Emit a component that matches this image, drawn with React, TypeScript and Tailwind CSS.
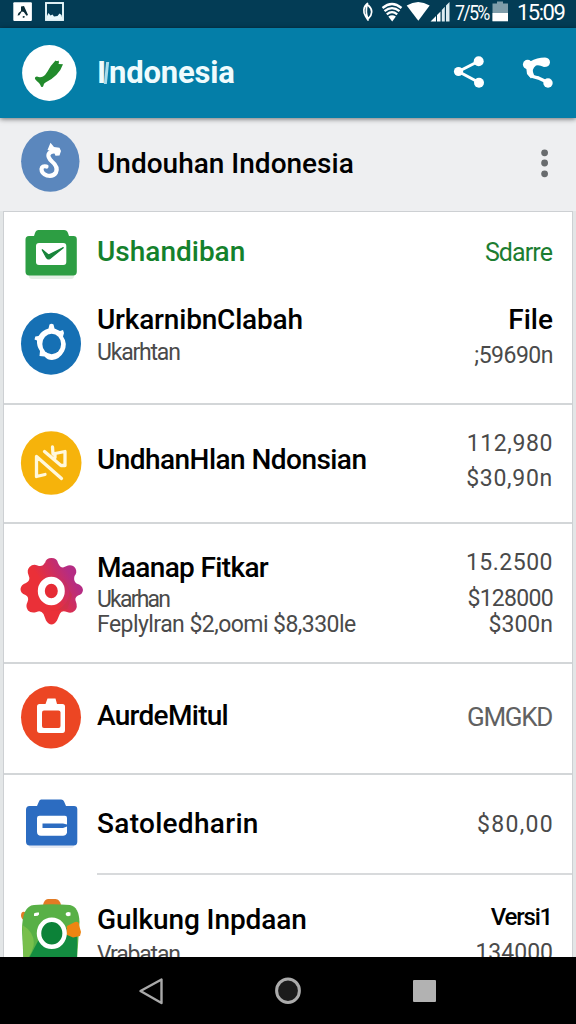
import type { ReactNode } from "react";

const TITLE = "h-6 text-[28px] leading-6 font-medium text-black whitespace-nowrap";
const SUB = "h-6 text-[23px] leading-6 text-[#4a4a4a] whitespace-nowrap";

function StatusBar() {
  return (
    <div className="flex h-[28px] shrink-0 items-start bg-[#033c55] text-white">
      <svg className="ml-[13px] mt-[2px] h-[19px] w-[19px]" viewBox="13 2 19 19">
        <rect x="13.3" y="2.2" width="18.6" height="18.8" rx="1" fill="#fff" />
        <path d="M21 6.500l3-0.500 2 4.500 2 4.500-1.500 0.800-2.700-3.800-2-0.500-2.500 3.800-1.800 0.200 1-2.500 2.500-2z M23 16l2 0.500-1 1.500-1.500-.8z" fill="#0a2a35" />
      </svg>
      <svg className="ml-[13px] mt-[2px] h-[19px] w-[19px]" viewBox="45 2 19 19">
        <rect x="46" y="3" width="17" height="17" fill="#033c55" stroke="#e9f8fb" strokeWidth="1.900" />
        <path d="M47 16l1.500-3 2 2.500 2-1 1.500 2 3.500-.5 2-2.500 2 1.500 1 4.500h-15.500z" fill="#e9f8fb" />
      </svg>
      <div className="flex-1" />
      <svg className="mr-[8px] mt-[2px] h-[20px] w-[12px]" viewBox="361 2 12 20">
        <path d="M367.500 3.500c-4.500 3.500-4.500 9-2 12.500l2.500 4M367.500 3.500c-1.500 5-1.500 11 .5 15.500M368.500 5.500c4.500 4 4 9 0 13" fill="none" stroke="#fff" strokeWidth="1.700" strokeLinecap="round" />
      </svg>
      <svg className="mt-[1px] h-[21px] w-[22px]" viewBox="381 1 22 21">
        <path d="M382.500 8Q392 0 401.500 8M384.500 11.200Q392 5 399.500 11.200M386.800 14.300Q392 10 397.200 14.300" fill="none" stroke="#fff" strokeWidth="2.300" />
        <path d="M388.300 16.500q3.800-2.500 7.600 0L392.200 21.500z" fill="#fff" />
      </svg>
      <svg className="ml-[3px] mt-[1px] h-[21px] w-[24px]" viewBox="406 1 24 21">
        <path d="M406.700 5.500q11.500-7 23 0L418.300 20.800z" fill="#fff" />
      </svg>
      <svg className="mt-[1px] h-[21px] w-[20px]" viewBox="430 1 20 21">
        <path d="M430.500 21.500l5.500-5.500v5.500zM437 15l3.500-3.500v10H437z" fill="#fff" />
        <path d="M441.800 10l3-3.300v14.800h-3zM446 5.500l3.500-3.500v19.500H446z" fill="#dcebf0" />
      </svg>
      <span className="ml-[5px] w-[33px] origin-left scale-x-[0.850] text-[21px] leading-[26px] tracking-[-2px] whitespace-nowrap">7/5%</span>
      <svg className="ml-[4px] mt-[1px] h-[21px] w-[17px]" viewBox="492 1 17 21">
        <path d="M497 1.500h6v2h5V21H492.500V3.500H497z" fill="#7f9daa" />
        <path d="M492.500 13H508v8.300h-15.500z" fill="#fff" />
      </svg>
      <span className="ml-[8px] w-[59px] text-[22px] leading-[26px] tracking-[-1.500px] whitespace-nowrap">15:09</span>
    </div>
  );
}

function AppBar() {
  return (
    <div className="relative z-10 flex h-[90px] shrink-0 bg-[#047ea8] shadow-[0_1px_5px_rgba(0,0,0,0.55)]">
      <svg className="ml-[20px] mt-[14px] h-[62px] w-[60px]" viewBox="20 42 60 62">
        <ellipse cx="49.300" cy="73" rx="27.200" ry="28" fill="#fff" />
        <path d="M55.500 60.500q1.500 1 3 0 1 1.500 0 3.500l4.500.2q-2 6-6.500 10.500-5 5-11 7.800-2 1-2 3-.8 2.500-2.500 1-.5-2-2-3.500-2-1.500-4-4-.5-2.500 2-2.500 3 1.300 6 0 2.500-1.500 4.500-5 3-6 8-11z" fill="#228a2c" />
      </svg>
      <h1 className="ml-[17px] mt-[29px] flex h-8 items-start text-[31px] leading-8 font-bold text-[#effbfd]">
        <span>I</span>
        <span className="ml-[-1px] mr-[1px] mt-[5px] h-[22px] w-[3px] skew-x-[-6deg] bg-[#a9dcec]" />
        <span className="tracking-[-0.200px]">ndonesia</span>
      </h1>
      <div className="flex-1" />
      <svg className="mt-[26px] h-[34px] w-[34px]" viewBox="452 54 34 34">
        <path d="M479 61L458.500 71.500 479 82.500" fill="none" stroke="#fff" strokeWidth="3" />
        <circle cx="478.700" cy="61.300" r="5" fill="#fff" />
        <circle cx="458.500" cy="71.500" r="4.600" fill="#fff" />
        <circle cx="479" cy="82.700" r="5" fill="#fff" />
      </svg>
      <svg className="ml-[35px] mr-[21px] mt-[26px] h-[34px] w-[34px]" viewBox="521 54 34 34">
        <path d="M528 64.500l2.500 10.500q1 1.500 8 3l9.500 4.500" fill="none" stroke="#fff" strokeWidth="3.400" />
        <path d="M530 61.500Q537 57.500 545 57.500 550 58 550 62.500 549.500 67 544 67 539 64.500 536 65.500 531 69 534 75L531 78.500 527 74 526 66z" fill="#fff" />
        <circle cx="527.600" cy="64.500" r="4.700" fill="#fff" />
        <circle cx="548" cy="83" r="4.700" fill="#fff" />
      </svg>
    </div>
  );
}

function Header() {
  return (
    <div className="flex h-[93px] shrink-0 bg-[#eeeff1]">
      <svg className="ml-[20px] mt-[11px] h-[66px] w-[64px]" viewBox="20 129 64 66">
        <ellipse cx="50.300" cy="161.300" rx="29.200" ry="30.500" fill="#5b87bd" />
        <path d="M56 151.500q-6-1-7.500 3-.8 3 3.500 7 6.500 5.500 4 11-3 4.500-9 3-5.500-2-5.500-6.500.5-3.500 5-2.500" fill="none" stroke="#fff" strokeWidth="4.200" strokeLinecap="round" strokeLinejoin="round" />
        <path d="M47.500 150l3-7.200 3.500 4.200 5.500.8 1.500 3.200-1.500 4.500-4 .3-1.500-3.500z" fill="#fff" />
      </svg>
      <h2 className="ml-[13px] mt-[34px] h-6 text-[28px] leading-6 font-medium whitespace-nowrap text-black">Undouhan Indonesia</h2>
      <div className="flex-1" />
      <svg className="mr-[26px] mt-[29px] h-[32px] w-[12px]" viewBox="538 147 12 32" fill="#686b6e">
        <circle cx="544.600" cy="152.800" r="3.400" />
        <circle cx="544.600" cy="163" r="3.400" />
        <circle cx="544.600" cy="173.800" r="3.400" />
      </svg>
    </div>
  );
}

function Row({ className, icon, left, right }: { className: string; icon: ReactNode; left: ReactNode; right: ReactNode }) {
  return (
    <div className={`flex shrink-0 ${className}`}>
      <div className="w-[93px] shrink-0 pl-[16px]">{icon}</div>
      <div className="flex-1 pt-px">{left}</div>
      <div className="pt-px pr-[19px] text-right">{right}</div>
    </div>
  );
}

const LINE = "border-b-2 border-[#d3d6d8]";

function GreenBoxIcon() {
  return (
    <svg className="mt-[12px] h-[60px] w-[64px]" viewBox="20 224 64 60">
      <rect x="29" y="272" width="45" height="7" rx="3" fill="#e3efe4" />
      <path d="M38.500 230H64q3 0 4 3l1 3h4.500q3.300 0 3.300 3.300v32.500q0 3.700-3.500 3.700H29q-3.500 0-3.500-3.700V239.500q0-3.500 3.500-3.500h5l1-3q1-3 3.500-3z" fill="#2d9e43" />
      <rect x="36" y="243" width="30.300" height="22" rx="3" fill="#fff" />
      <path d="M42 249.500l6.500 5.500L63.500 247.500 50 258.500q-2 1.200-3.500-.8z" fill="#17843a" stroke="#17843a" strokeWidth="1.200" />
    </svg>
  );
}

function BlueRingIcon() {
  return (
    <svg className="mt-[18px] h-[66px] w-[64px]" viewBox="20 310 64 66">
      <ellipse cx="51" cy="343.700" rx="30" ry="31" fill="#1670b4" />
      <path d="M49.500 324.500q2-1.500 4 0l1 4 5.500 2.500 3-1 1 3-1 3.500q5 7 1 15-4.500 8-12 8.500-4.500 0-7.500-3.500l-5-.5.500-5q-3.500-5-3-10.500l-2.500-1 .8-3 3.200-.5q3-5.500 10-7.500z" fill="#fff" />
      <ellipse cx="51.700" cy="344" rx="9.400" ry="10.200" fill="#1670b4" />
    </svg>
  );
}

function YellowIcon() {
  return (
    <svg className="mt-[26px] h-[66px] w-[64px]" viewBox="20 430 64 66">
      <ellipse cx="51.200" cy="463" rx="30.300" ry="31.800" fill="#f6b30b" />
      <path d="M45 474.500l-8.500 2V456.500l25 22M44.500 451.500l16.500 14h4v-14l-10 2v4M52.500 447l.5 7" fill="none" stroke="#fff8dc" strokeWidth="3.300" strokeLinecap="round" strokeLinejoin="round" />
    </svg>
  );
}

function GearIcon() {
  return (
    <svg className="mt-[32px] h-[70px] w-[64px]" viewBox="20 556 64 70">
      <defs>
        <linearGradient id="gear" x1="0.250" y1="0.600" x2="0.800" y2="0.250">
          <stop offset="0.300" stopColor="#ea3038" />
          <stop offset="1" stopColor="#b52c83" />
        </linearGradient>
      </defs>
      <path d="M45 563q1-5 6.500-5t6.500 5q2 4.500 5 4.500l5-2q5-1 7.500 3 2 4-1 7.500-1.500 5 2 7.500 6 1.500 6.500 6.500-.5 4.500-5 5.500-4 2-2 6.500 2 5-1 8.500-3.500 3.500-8 1.500-5-2-7 1.500l-3 7q-2.500 4-5.500 4t-5.500-4l-2.500-6.500q-2.500-4-7-2-5.500 1.500-8.500-1.500-3-4-.5-8.500 2-5-2-7-5-1.500-5-6 .5-4.500 5.500-6 5-2.500 2.500-8-2-5 1-8 3.500-3.500 8-1.500 5 2 7.500-3z" fill="url(#gear)" />
      <path d="M62 578q12 13 4 25-8 9-15 8l16-2 5-14z" fill="#c83445" opacity=".5" />
      <ellipse cx="51.300" cy="591" rx="10" ry="10.800" fill="#e62b35" stroke="#fff" strokeWidth="7" />
    </svg>
  );
}

function OrangeIcon() {
  return (
    <svg className="mt-[20px] h-[66px] w-[64px]" viewBox="20 684 64 66">
      <ellipse cx="51" cy="717.300" rx="30" ry="31.200" fill="#ec4623" />
      <path d="M47.500 698.500h8l1.500 5.500h5.500q2.500 0 2.500 2.500V730q0 3-2.500 3H40q-3 0-3-3v-23.500q0-2.500 2.500-2.500h6z" fill="#fff" />
      <rect x="42" y="710.500" width="18.500" height="17.500" rx="2" fill="#ec4623" />
    </svg>
  );
}

function BlueBoxIcon() {
  return (
    <svg className="mt-[22px] h-[54px] w-[64px]" viewBox="20 797 64 54">
      <rect x="29" y="841" width="45" height="7" rx="3" fill="#e4e9f3" />
      <path d="M41 799.500H61q2.500 0 3.500 3l1.500 3.500h8q3.300 0 3.300 3.300v32.200q0 4-3.500 4H29.500q-3.500 0-3.500-4V810q0-4 3.500-4H37l1.500-3.500q1-3 2.500-3z" fill="#2c6cc1" />
      <path d="M37 818q0-2.300 2.500-2.300H65q2 0 2 2v15q-1 3-4 3H41q-4 0-4-4z" fill="#fff" />
      <path d="M42.500 823.500H63l4 1v2l-4 1.500H42.500z" fill="#2c6cc1" />
    </svg>
  );
}

function CameraIcon() {
  return (
    <svg className="mt-[22px] h-[60px] w-[64px]" viewBox="20 897 64 60">
      <path d="M43 905.500q1-6.500 5-6.500h7.500q4.500 0 5.500 6.500z" fill="#e27b24" />
      <path d="M25 912q-4-1-4 4 1 4.500 4 4z" fill="#e27b24" />
      <path d="M34 905Q52 903.500 70 905 79 907 79.500 922L77 960H23.500L22 930Q22 906 34 905z" fill="#58b046" />
      <path d="M22.500 925q13 8 11 21-2 8-7 14h-3z" fill="#78bf4c" />
      <path d="M38 941l-10 19h49V933l-18-8z" fill="#138c40" />
      <path d="M67 926l8-4q4-1 4 3l2 7-1 4-7 1.500-7-3z" fill="#ee8512" />
      <path d="M34 914q0-2 5-1.500v2q-1 2-5 1.500zM65.500 914q1-3 5-1.500v3q-4 2-5-1.500z" fill="#fff" />
      <ellipse cx="51.800" cy="933.300" rx="12.800" ry="13.500" fill="#0c8238" stroke="#fff" strokeWidth="4.500" />
    </svg>
  );
}

function NavBar() {
  return (
    <div className="flex h-[67px] shrink-0 bg-black">
      <svg className="ml-[136px] mt-[18px] h-[32px] w-[30px]" viewBox="136 975 30 32">
        <path d="M161.500 979.500v23.500L140.500 991z" fill="none" stroke="#a9a9a9" strokeWidth="2.400" strokeLinejoin="round" />
      </svg>
      <svg className="ml-[107px] mt-[18px] h-[32px] w-[30px]" viewBox="273 975 30 32">
        <ellipse cx="288" cy="990.700" rx="11.400" ry="11.800" fill="#1b1b1b" stroke="#ababab" strokeWidth="3" />
      </svg>
      <div className="ml-[110px] mt-[23px] h-[22px] w-[23px] rounded-[1px] bg-[#b2b2b2]" />
    </div>
  );
}

export default function App() {
  return (
    <div className="flex h-[1024px] w-[576px] flex-col overflow-hidden bg-[#e3e6e7] font-['Roboto','Liberation_Sans',sans-serif]">
      <StatusBar />
      <AppBar />
      <Header />
      <main className="mx-[3px] flex h-[746px] shrink-0 flex-col overflow-hidden border-x border-t border-[#cdd0d3] bg-white">
        <Row
          className="h-[80px]"
          icon={<GreenBoxIcon />}
          left={<div className="mt-[27px] h-6 text-[28px] leading-6 font-medium whitespace-nowrap text-[#14812c]">Ushandiban</div>}
          right={<div className="mr-px mt-[28px] h-6 text-[25px] leading-6 tracking-[-0.900px] whitespace-nowrap text-[#1c7d31]">Sdarre</div>}
        />
        <Row
          className={`h-[113px] ${LINE}`}
          icon={<BlueRingIcon />}
          left={<><div className={`mt-[15px] tracking-[-0.200px] ${TITLE}`}>UrkarnibnClabah</div><div className={`mt-[9px] tracking-[-1.200px] ${SUB}`}>Ukarhtan</div></>}
          right={<><div className={`mt-[15px] ${TITLE}`}>File</div><div className={`mt-[12px] tracking-[-0.500px] ${SUB}`}>;59690n</div></>}
        />
        <Row
          className={`-mt-px h-[120px] ${LINE}`}
          icon={<YellowIcon />}
          left={<div className={`mt-[43px] tracking-[-0.550px] ${TITLE}`}>UndhanHlan Ndonsian</div>}
          right={<><div className={`mt-[27px] tracking-[0.600px] ${SUB}`}>112,980</div><div className={`mt-[11px] tracking-[0.700px] ${SUB}`}>$30,90n</div></>}
        />
        <Row
          className={`h-[140px] ${LINE}`}
          icon={<GearIcon />}
          left={<><div className={`mt-[31px] tracking-[-0.650px] ${TITLE}`}>Maanap Fitkar</div><div className={`mt-[8px] tracking-[-1.800px] ${SUB}`}>Ukarhan</div><div className={`mt-[1px] tracking-[-0.550px] ${SUB}`}>Feplylran $2,oomi $8,330le</div></>}
          right={<><div className={`mt-[26px] tracking-[0.500px] ${SUB}`}>15.2500</div><div className={`mt-[12px] tracking-[-0.700px] ${SUB}`}>$128000</div><div className={`mt-[2px] ${SUB}`}>$300n</div></>}
        />
        <Row
          className={`h-[111px] ${LINE}`}
          icon={<OrangeIcon />}
          left={<div className={`mt-[39px] tracking-[-0.700px] ${TITLE}`}>AurdeMitul</div>}
          right={<div className="mr-px mt-[40px] h-6 text-[26px] leading-6 tracking-[-1.300px] whitespace-nowrap text-[#616161]">GMGKD</div>}
        />
        <Row
          className="h-[98px]"
          icon={<BlueBoxIcon />}
          left={<div className={`mt-[36px] tracking-[0.300px] ${TITLE}`}>Satoledharin</div>}
          right={<div className={`-mr-px mt-[37px] tracking-[1.300px] ${SUB}`}>$80,00</div>}
        />
        <div className="ml-[93px] h-[2px] shrink-0 bg-[#d8dadc]" />
        <Row
          className="h-[90px]"
          icon={<CameraIcon />}
          left={<><div className={`mt-[32px] tracking-[-0.100px] ${TITLE}`}>Gulkung Inpdaan</div><div className={`mt-[11px] tracking-[-1.200px] ${SUB}`}>Vrabatan</div></>}
          right={<><div className="mr-px mt-[29px] h-6 text-[24px] leading-6 font-medium tracking-[-1.200px] whitespace-nowrap text-black">Versi1</div><div className={`mt-[12px] ${SUB}`}>134000</div></>}
        />
      </main>
      <NavBar />
    </div>
  );
}
